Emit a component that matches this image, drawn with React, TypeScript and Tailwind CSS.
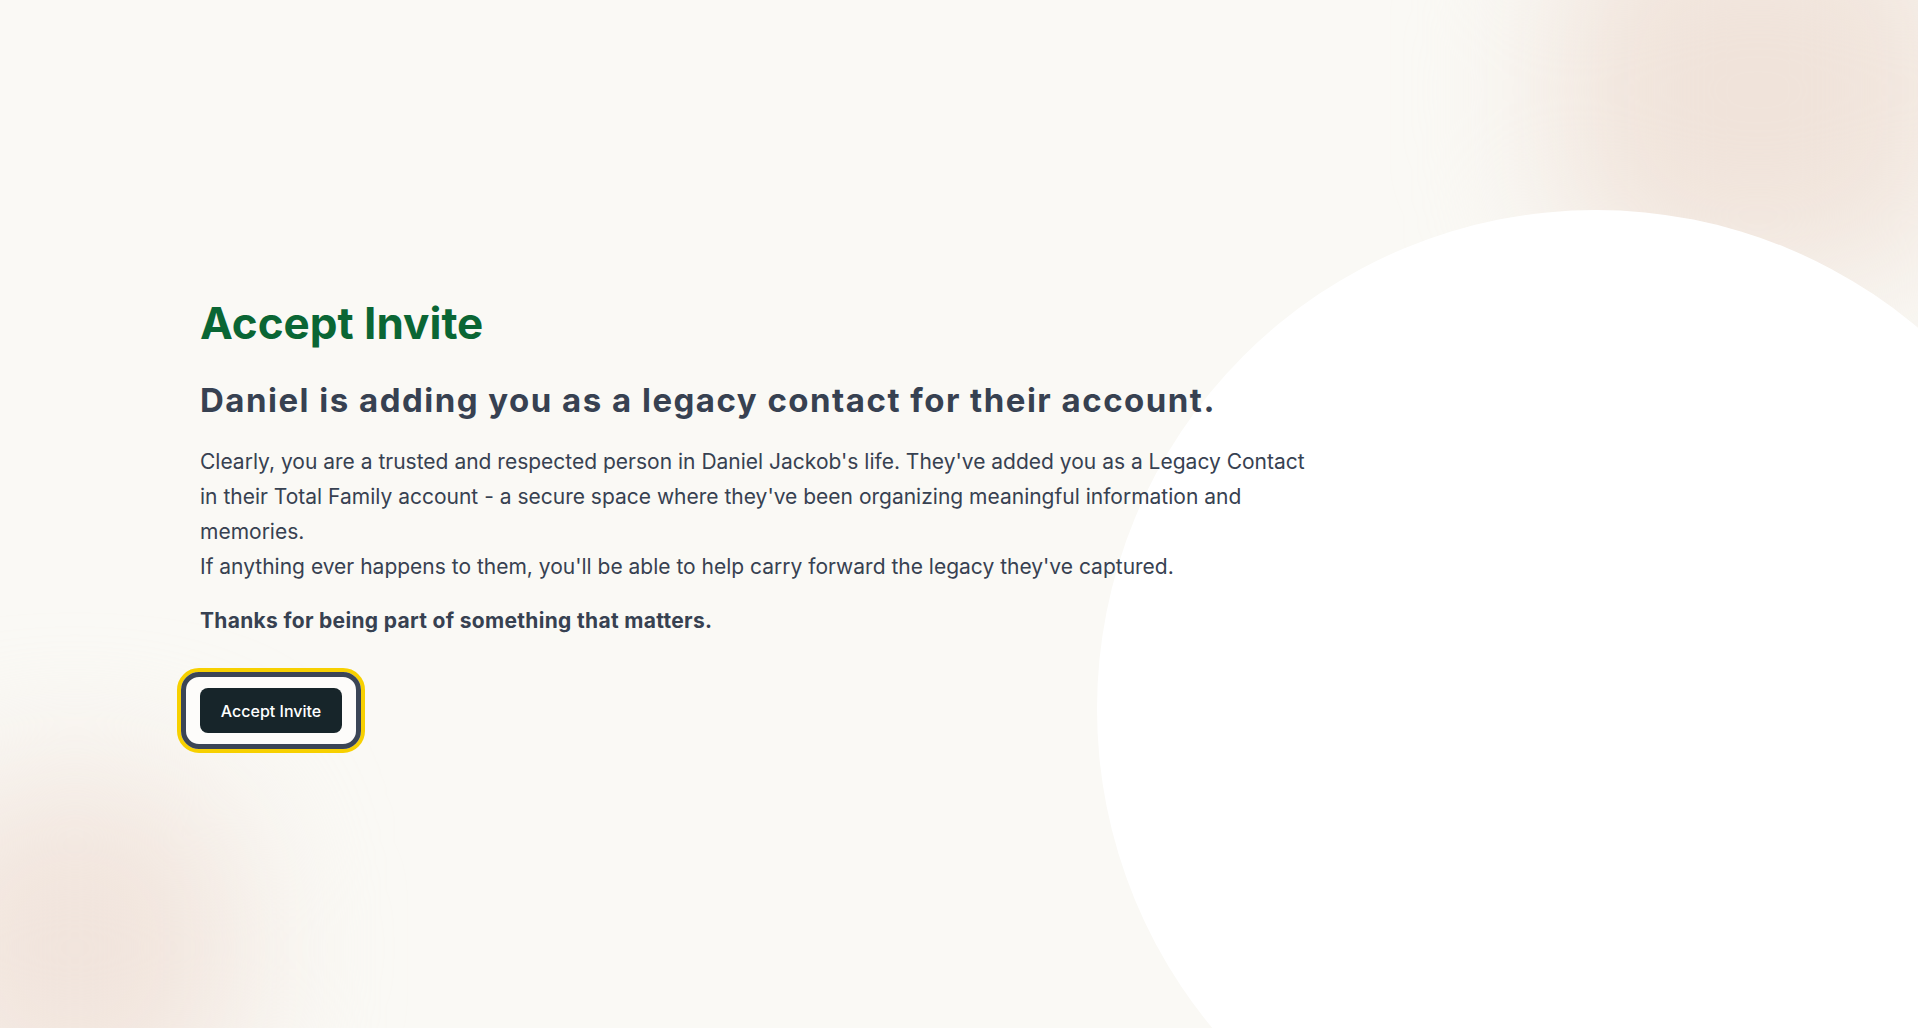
export default function App() {
  return (
    <div className="relative min-h-screen w-full overflow-hidden bg-[#faf9f5] font-['Inter',sans-serif]">
      {/* decorative background */}
      <div className="pointer-events-none absolute -right-[40px] -top-[100px] h-[380px] w-[400px] rounded-[120px] bg-[#f0e3da] blur-[70px]" />
      <div className="pointer-events-none absolute -bottom-[90px] -left-[90px] h-[340px] w-[330px] rounded-[120px] bg-[#f1e4dc] blur-[70px]" />
      <div className="pointer-events-none absolute left-[1097px] top-[210px] h-[998px] w-[998px] rounded-full bg-white" />

      <main className="relative flex w-[1320px] flex-col items-start pl-[200px] pt-[297px] text-[#374151]">
        <h1 className="text-[44px] font-bold leading-[53px] text-[#0a6634]">Accept Invite</h1>
        <h2 className="mt-[30px] text-[33px] font-bold leading-[40px] tracking-[0.045em]">
          Daniel is adding you as a legacy contact for their account.
        </h2>
        <p className="mt-[24px] text-[21px] leading-[35px]">
          Clearly, you are a trusted and respected person in Daniel Jackob's life. They've added you as a Legacy Contact in
          their Total Family account - a secure space where they've been organizing meaningful information and memories.
          <br />
          If anything ever happens to them, you'll be able to help carry forward the legacy they've captured.
        </p>
        <p className="mt-[19px] text-[21px] font-bold leading-[35px] tracking-[0.015em]">
          Thanks for being part of something that matters.
        </p>
        <div className="mt-[30px] -ml-[23px] flex rounded-[22px] border-[4px] border-[#f7d000]">
          <div className="flex rounded-[18px] border-[5px] border-[#3b4556] bg-[#fdfcfa] px-[14px] py-[11px]">
            <button className="h-[45px] w-[142px] rounded-lg bg-[#17252a] text-[16px] font-medium text-white">
              Accept Invite
            </button>
          </div>
        </div>
      </main>
    </div>
  )
}
